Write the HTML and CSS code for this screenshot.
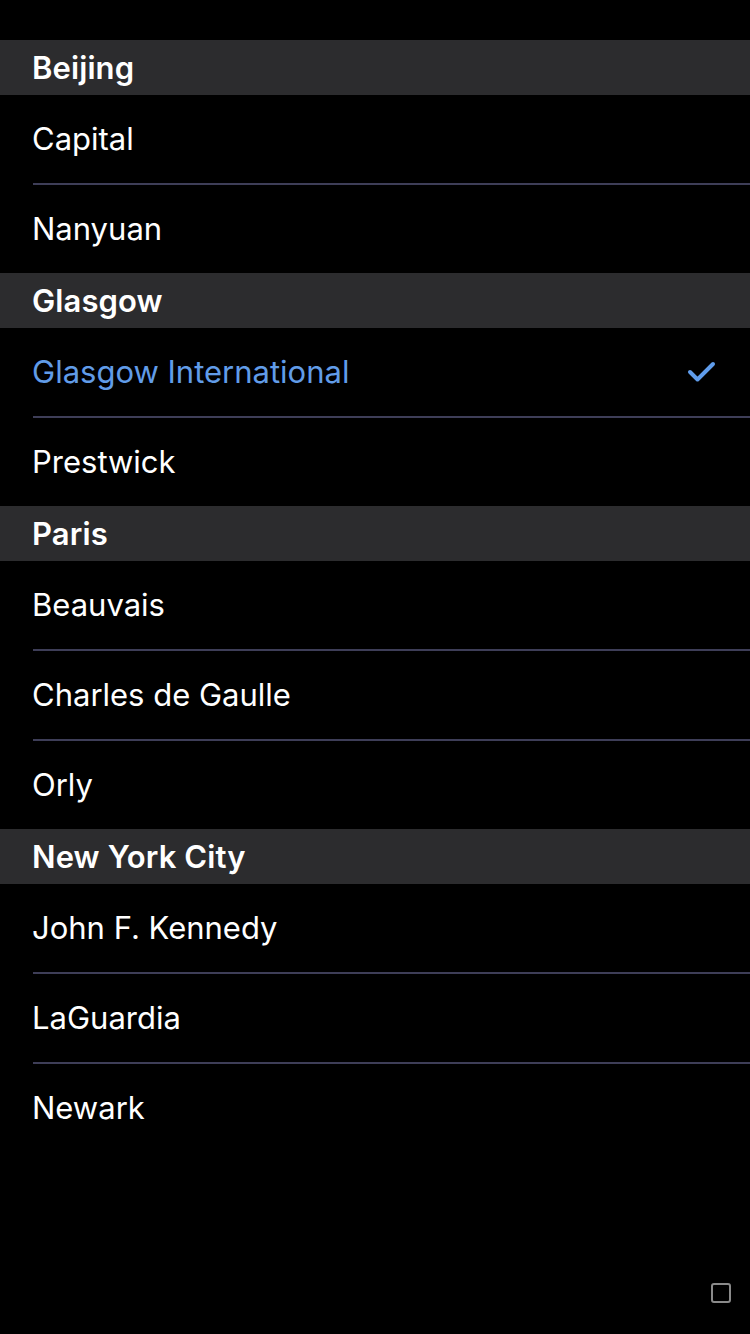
FILE: index.html
```html
<!DOCTYPE html>
<html>
<head>
<meta charset="utf-8">
<link rel="stylesheet" href="styles.css">
</head>
<body>
<div class="list">
  <section class="group">
    <div class="header">Beijing</div>
    <div class="row"><span class="label">Capital</span></div>
    <div class="row"><span class="label">Nanyuan</span></div>
  </section>
  <section class="group">
    <div class="header">Glasgow</div>
    <div class="row selected"><span class="label">Glasgow International</span>
      <svg class="check" width="30" height="26" viewBox="0 0 30 26"><path d="M3 13 L10.5 20.5 L26 5" fill="none" stroke="#5f9ceb" stroke-width="4" stroke-linecap="round" stroke-linejoin="round"/></svg>
    </div>
    <div class="row"><span class="label">Prestwick</span></div>
  </section>
  <section class="group">
    <div class="header">Paris</div>
    <div class="row"><span class="label">Beauvais</span></div>
    <div class="row"><span class="label">Charles de Gaulle</span></div>
    <div class="row"><span class="label">Orly</span></div>
  </section>
  <section class="group">
    <div class="header">New York City</div>
    <div class="row"><span class="label">John F. Kennedy</span></div>
    <div class="row"><span class="label">LaGuardia</span></div>
    <div class="row"><span class="label">Newark</span></div>
  </section>
</div>
<div class="corner-box"></div>
</body>
</html>
```
FILE: styles.css
```css
html, body {
  margin: 0;
  padding: 0;
  background: #000;
  width: 750px;
  height: 1334px;
  overflow: hidden;
  font-family: Inter, "Noto Sans", sans-serif;
  color: #fff;
}
.list {
  padding-top: 40px;
  display: flex;
  flex-direction: column;
}
.group {
  display: flex;
  flex-direction: column;
}
.header {
  height: 55px;
  background: #2c2c2e;
  display: flex;
  align-items: center;
  padding-left: 32px;
  font-size: 31px;
  font-weight: 600;
  letter-spacing: 0.1px;
}
.row {
  height: 88px;
  margin-left: 33px;
  display: flex;
  align-items: center;
  justify-content: space-between;
  font-size: 31px;
  font-weight: 400;
}
.label {
  margin-left: -1px;
  padding-bottom: 2px;
}
.row + .row {
  border-top: 2px solid #3e3e58;
}
.row.selected .label {
  color: #619ce8;
}
.check {
  margin-right: 33px;
}
.corner-box {
  position: absolute;
  left: 711px;
  top: 1283px;
  width: 16px;
  height: 16px;
  border: 2px solid #8a8a8a;
  border-radius: 3px;
}
```
